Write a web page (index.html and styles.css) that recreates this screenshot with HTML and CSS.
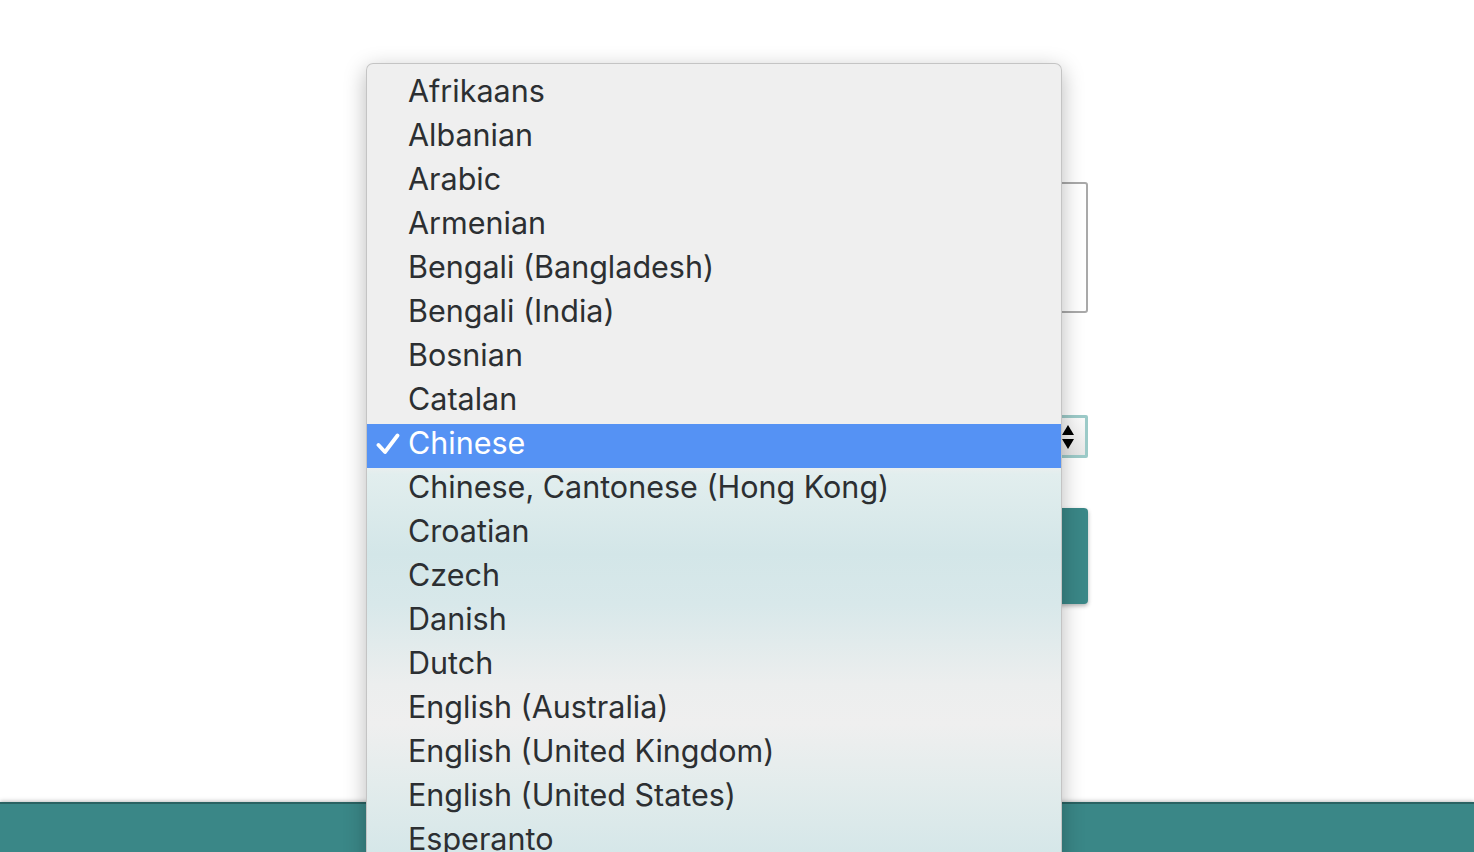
FILE: index.html
```html
<!DOCTYPE html>
<html lang="en">
<head>
  <meta charset="UTF-8">
  <title>Language</title>
  <link rel="stylesheet" href="styles.css">
</head>
<body>
  <div class="page">
    <form class="lang-form">
      <textarea class="text-input"></textarea>
      <div class="select-box">
        <span class="stepper">
          <svg width="14" height="32" viewBox="0 0 14 32">
            <path d="M7 4 L13 14 L1 14 Z" fill="#000"/>
            <path d="M1 18 L13 18 L7 28 Z" fill="#000"/>
          </svg>
        </span>
      </div>
      <button type="button" class="go-btn"></button>
    </form>
  </div>
  <footer class="footer"></footer>

  <ul class="menu">
    <li>Afrikaans</li>
    <li>Albanian</li>
    <li>Arabic</li>
    <li>Armenian</li>
    <li>Bengali (Bangladesh)</li>
    <li>Bengali (India)</li>
    <li>Bosnian</li>
    <li>Catalan</li>
    <li class="selected">
      <svg class="check" width="24" height="22" viewBox="0 0 24 22">
        <path d="M2.5 12 L9 19 L21.5 2.5" fill="none" stroke="#fff" stroke-width="3.8" stroke-linecap="round" stroke-linejoin="round"/>
      </svg>Chinese
    </li>
    <li>Chinese, Cantonese (Hong Kong)</li>
    <li>Croatian</li>
    <li>Czech</li>
    <li>Danish</li>
    <li>Dutch</li>
    <li>English (Australia)</li>
    <li>English (United Kingdom)</li>
    <li>English (United States)</li>
    <li>Esperanto</li>
  </ul>
</body>
</html>
```

FILE: styles.css
```css
html, body {
  margin: 0;
  height: 852px;
  overflow: hidden;
  background: #fff;
  font-family: Inter, "Open Sans", sans-serif;
}

.page {
  height: 802px;
  padding-top: 182px;
  box-sizing: border-box;
}

.lang-form {
  width: 700px;
  margin-left: 388px;
  display: flex;
  flex-direction: column;
}

.text-input {
  height: 131px;
  border: 2px solid #a9a9a9;
  border-radius: 3px;
  box-sizing: border-box;
  resize: none;
  background: #fff;
}

.select-box {
  margin-top: 102px;
  height: 43px;
  border: 3px solid #9ccac8;
  border-radius: 2px;
  box-sizing: border-box;
  display: flex;
  align-items: center;
  justify-content: flex-end;
  background: linear-gradient(#fafafa, #e6e6e6);
}

.stepper {
  display: flex;
  align-items: center;
  padding-right: 10px;
}

.go-btn {
  margin-top: 50px;
  height: 96px;
  border: none;
  border-radius: 4px;
  background: #3a8787;
  box-shadow: 0 2px 4px rgba(0, 0, 0, 0.3);
}

.footer {
  height: 50px;
  background: #3a8787;
  border-top: 2px solid #2a6262;
  box-shadow: 0 -1px 4px rgba(0, 0, 0, 0.25);
  box-sizing: border-box;
}

/* open native-looking dropdown */
.menu {
  position: absolute;
  left: 366px;
  top: 63px;
  width: 696px;
  height: 800px;
  margin: 0;
  padding: 8px 0 0;
  list-style: none;
  box-sizing: border-box;
  overflow: hidden;
  border: 1px solid #c4c4c4;
  border-bottom: none;
  border-radius: 7px 7px 0 0;
  box-shadow: 0 6px 22px rgba(0, 0, 0, 0.28);
  background: linear-gradient(
    #efefef 0px,
    #efefef 400px,
    #e2eeee 410px,
    #d3e6e8 490px,
    #d8e8ea 540px,
    #eceeee 620px,
    #efefef 660px,
    #e3ecec 720px,
    #d3e6e8 800px
  );
}

.menu li {
  height: 44px;
  line-height: 38px;
  padding-left: 41px;
  font-size: 30.5px;
  color: #2c2f32;
  white-space: nowrap;
  position: relative;
}

.menu li.selected {
  background: #5592f4;
  color: #fff;
}

.check {
  position: absolute;
  left: 9px;
  top: 9px;
}
```
